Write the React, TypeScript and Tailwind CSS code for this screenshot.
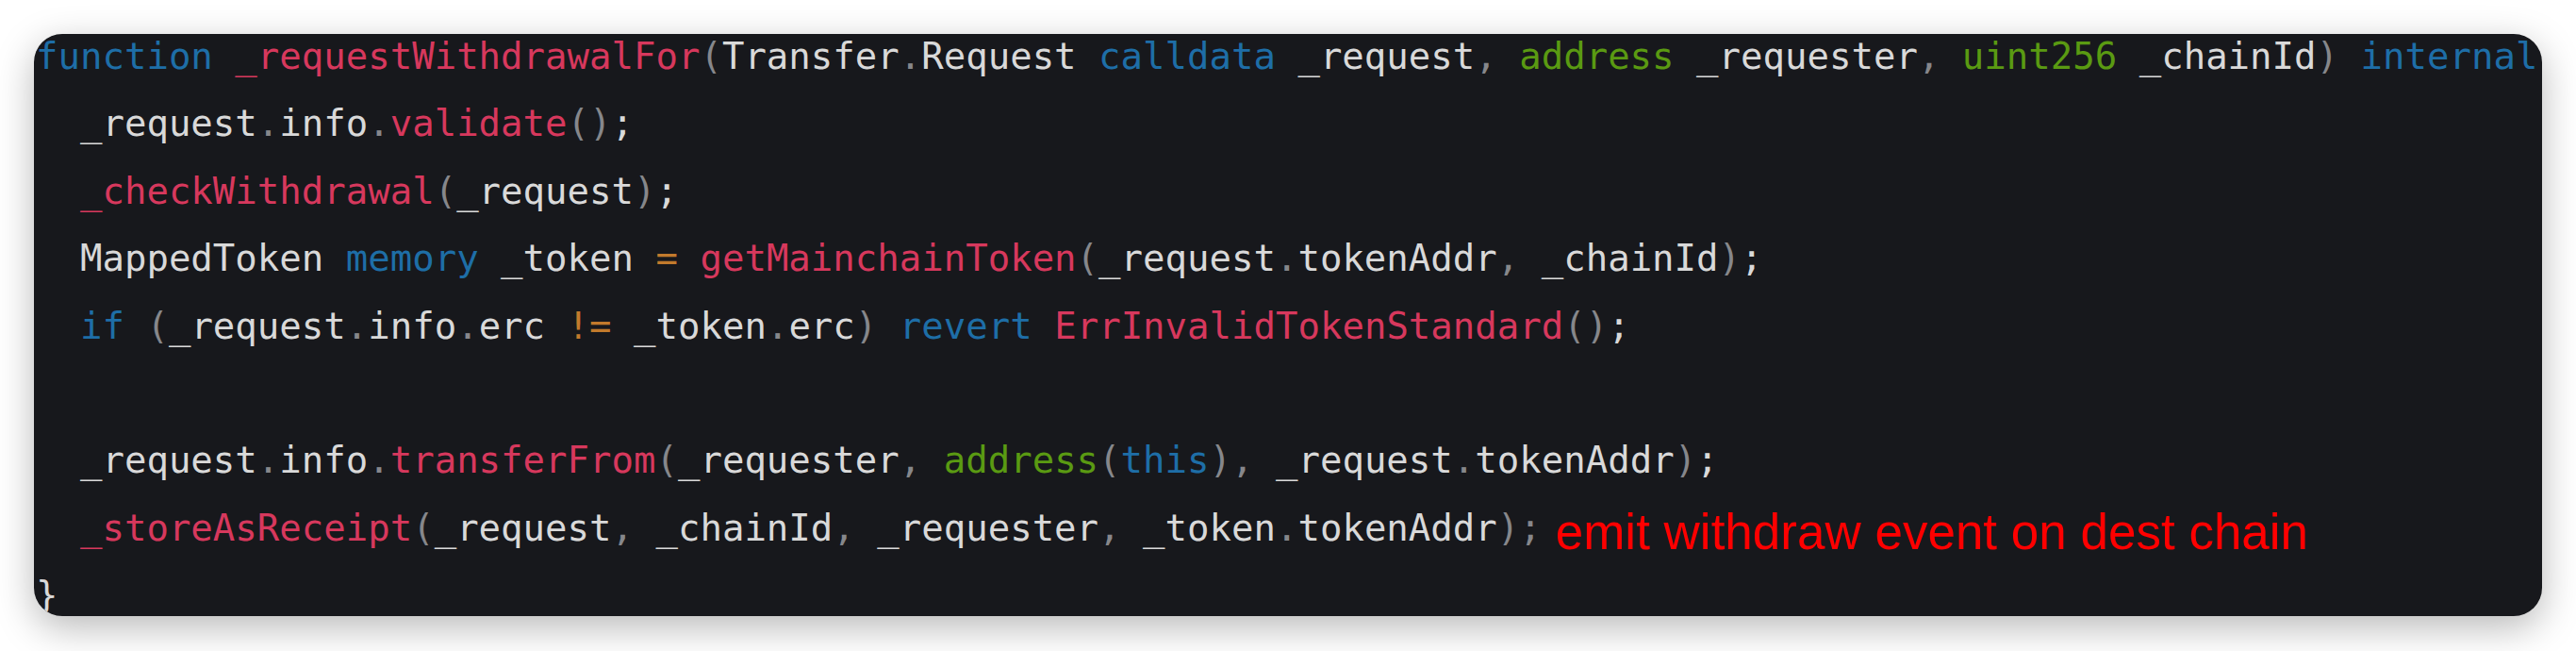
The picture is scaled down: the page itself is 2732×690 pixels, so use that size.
type Kind = 'kw' | 'fn' | 'ty' | 'op' | 'p' | 'tx'

// t = [kind, text]
type Tok = [Kind, string]

const color: Record<Kind, string> = {
  kw: 'text-[#1e6ea7]',
  fn: 'text-[#d7385d]',
  ty: 'text-[#5a9a12]',
  op: 'text-[#c27a2c]',
  p: 'text-[#86878b]',
  tx: 'text-[#d9d9d9]',
}

const lines: Tok[][] = [
  [
    ['kw', 'function'], ['tx', ' '], ['fn', '_requestWithdrawalFor'], ['p', '('],
    ['tx', 'Transfer'], ['p', '.'], ['tx', 'Request '], ['kw', 'calldata'], ['tx', ' _request'], ['p', ', '],
    ['ty', 'address'], ['tx', ' _requester'], ['p', ', '], ['ty', 'uint256'], ['tx', ' _chainId'], ['p', ') '],
    ['kw', 'internal'],
  ],
  [['tx', '  _request'], ['p', '.'], ['tx', 'info'], ['p', '.'], ['fn', 'validate'], ['p', '()'], ['tx', ';']],
  [['tx', '  '], ['fn', '_checkWithdrawal'], ['p', '('], ['tx', '_request'], ['p', ')'], ['tx', ';']],
  [
    ['tx', '  MappedToken '], ['kw', 'memory'], ['tx', ' _token '], ['op', '='], ['tx', ' '],
    ['fn', 'getMainchainToken'], ['p', '('], ['tx', '_request'], ['p', '.'], ['tx', 'tokenAddr'], ['p', ', '],
    ['tx', '_chainId'], ['p', ')'], ['tx', ';'],
  ],
  [
    ['tx', '  '], ['kw', 'if'], ['tx', ' '], ['p', '('], ['tx', '_request'], ['p', '.'], ['tx', 'info'], ['p', '.'],
    ['tx', 'erc '], ['op', '!='], ['tx', ' _token'], ['p', '.'], ['tx', 'erc'], ['p', ') '], ['kw', 'revert'],
    ['tx', ' '], ['fn', 'ErrInvalidTokenStandard'], ['p', '()'], ['tx', ';'],
  ],
  [],
  [
    ['tx', '  _request'], ['p', '.'], ['tx', 'info'], ['p', '.'], ['fn', 'transferFrom'], ['p', '('],
    ['tx', '_requester'], ['p', ', '], ['ty', 'address'], ['p', '('], ['kw', 'this'], ['p', '), '],
    ['tx', '_request'], ['p', '.'], ['tx', 'tokenAddr'], ['p', ')'], ['tx', ';'],
  ],
  [
    ['tx', '  '], ['fn', '_storeAsReceipt'], ['p', '('], ['tx', '_request'], ['p', ', '], ['tx', '_chainId'],
    ['p', ', '], ['tx', '_requester'], ['p', ', '], ['tx', '_token'], ['p', '.'], ['tx', 'tokenAddr'],
    ['p', ')'], ['p', ';'],
  ],
  [['tx', '}']],
]

export default function App() {
  return (
    <div className="w-[2732px] h-[690px] bg-white pt-[36px] pl-[36px]">
      <div className="w-[2660px] h-[617px] rounded-[30px] overflow-hidden bg-[#17181c] shadow-[0_12px_40px_rgba(0,0,0,0.28)]">
        <pre className="-mt-[12px] pl-[2px] font-['DejaVu_Sans_Mono',monospace] text-[39px] leading-[71.4px] whitespace-pre">
          {lines.map((line, i) => (
            <div key={i} className="h-[71.4px]">
              {line.map(([k, s], j) => (
                <span key={j} className={color[k]}>
                  {s}
                </span>
              ))}
              {i === 7 && (
                <span className="ml-[15px] align-[-9px] font-['Liberation_Sans',Arial,sans-serif] text-[53px] text-[#ff0000]">
                  emit withdraw event on dest chain
                </span>
              )}
            </div>
          ))}
        </pre>
      </div>
    </div>
  )
}
